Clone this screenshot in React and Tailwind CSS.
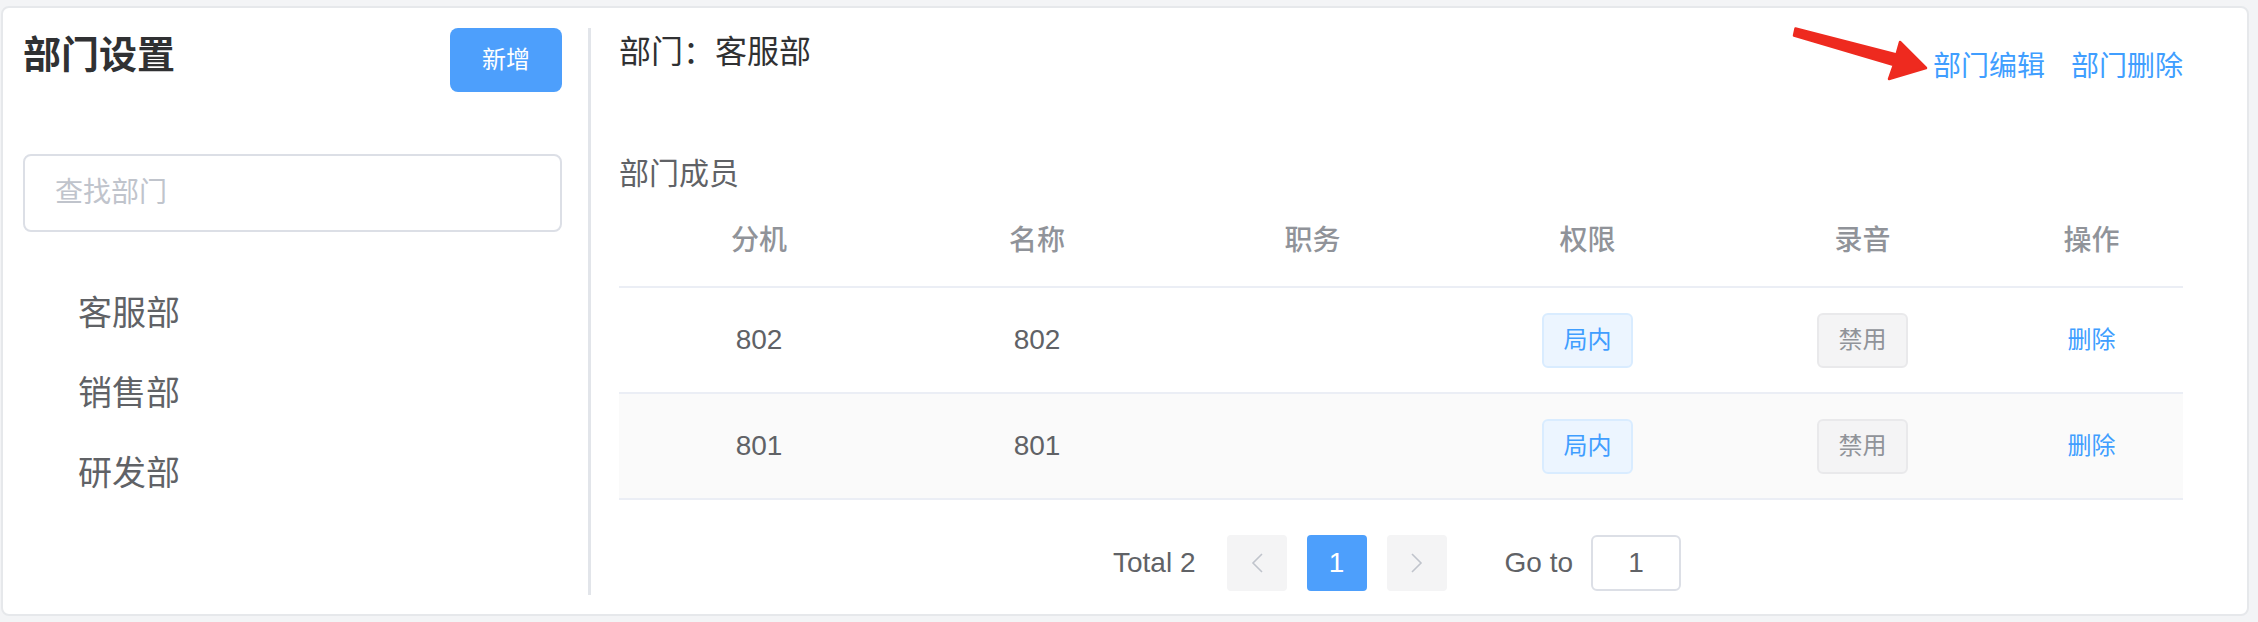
export default function App() {

  const depts = ["客服部", "销售部", "研发部"];
  const members = [
    { ext: "802", name: "802" },
    { ext: "801", name: "801" }
  ];
  const cols = ["w-[280px]", "w-[276px]", "w-[275px]", "w-[275px]", "w-[275px]", "w-[183px]"];
  const heads = ["分机", "名称", "职务", "权限", "录音", "操作"];

  return (

    <div className="h-[622px] w-[2258px] bg-[#f3f4f6] pt-[6px] pl-[1px] font-['Liberation_Sans','Noto_Sans_CJK_SC',sans-serif]">

      <div className="relative h-[610px] w-[2248px] rounded-[8px] border-2 border-[#e6e8eb] bg-white pt-[20px] pl-[20px]">

        <div className="flex">

          {/* left: department list */}
          <div className="w-[565px] pr-[26px]">

            <div className="flex items-start justify-between">
              <h2 className="text-[38px] leading-[54px] font-bold text-[#303133]">
                部门设置
              </h2>
              <button className="h-[64px] w-[112px] rounded-[8px] bg-[#4d9ffc] text-[24px] text-white">
                新增
              </button>
            </div>

            <input
            className="mt-[62px] h-[78px] w-full rounded-[8px] border-2 border-[#dcdfe6] pl-[30px] text-[28px] text-[#606266] outline-none placeholder:text-[#c0c4cc]"
            placeholder="查找部门"
            />

            <div className="mt-[41px]">
              {depts.map((d) => (
                <div key={d} className="h-[80px] pl-[55px] text-[34px] leading-[80px] text-[#606266]">
                  {d}
                </div>
              ))}
            </div>

          </div>

          {/* right: department detail */}
          <div className="h-[567px] border-l-[3px] border-[#e2e5ea] pl-[28px]">

            <div className="flex w-[1564px] items-start justify-between">
              <div className="text-[32px] leading-[48px] text-[#303133]">
                部门：客服部
              </div>
              <div className="mt-[19px] flex gap-[26px] text-[28px] leading-[40px] text-[#409eff]">
                <span>部门编辑</span>
                <span>部门删除</span>
              </div>
            </div>

            <div className="mt-[65px] text-[30px] leading-[44px] text-[#606266]">
              部门成员
            </div>

            <div className="w-[1564px]">

              <div className="flex h-[92px] items-center border-b-2 border-[#ebeef5] text-[28px] font-medium text-[#909399]">
                {heads.map((h, i) => (
                  <div key={h} className={cols[i] + " text-center"}>{h}</div>
                ))}
              </div>

              {members.map((m, idx) => (
                <div
                key={m.ext}
                className={idx % 2 === 1
                  ? "flex h-[106px] items-center border-b-2 border-[#ebeef5] bg-[#fafafa] text-[28px] text-[#606266]"
                  : "flex h-[106px] items-center border-b-2 border-[#ebeef5] text-[28px] text-[#606266]"}
                >
                  <div className="w-[280px] text-center">{m.ext}</div>
                  <div className="w-[276px] text-center">{m.name}</div>
                  <div className="w-[275px] text-center"></div>
                  <div className="flex w-[275px] justify-center">
                    <span className="flex h-[55px] w-[91px] items-center justify-center rounded-[6px] border-2 border-[#d9ecff] bg-[#ecf5ff] text-[24px] text-[#409eff]">
                      局内
                    </span>
                  </div>
                  <div className="flex w-[275px] justify-center">
                    <span className="flex h-[55px] w-[91px] items-center justify-center rounded-[6px] border-2 border-[#e9e9eb] bg-[#f4f4f5] text-[24px] text-[#909399]">
                      禁用
                    </span>
                  </div>
                  <div className="w-[183px] text-center text-[24px] text-[#409eff]">删除</div>
                </div>
              ))}

              {/* pagination */}
              <div className="mt-[35px] flex items-center justify-center pr-[8px] text-[28px] text-[#606266]">
                <span className="mr-[31px]">Total 2</span>
                <button className="flex h-[56px] w-[60px] items-center justify-center rounded-[4px] bg-[#f4f4f5]">
                  <svg width="12" height="20" viewBox="0 0 12 20" fill="none" stroke="#c0c4cc" strokeWidth="1.6">
                    <polyline points="11,1 2,10 11,19" />
                  </svg>
                </button>
                <button className="ml-[20px] h-[56px] w-[60px] rounded-[4px] bg-[#4d9ffc] text-[28px] text-white">
                  1
                </button>
                <button className="ml-[20px] flex h-[56px] w-[60px] items-center justify-center rounded-[4px] bg-[#f4f4f5]">
                  <svg width="12" height="20" viewBox="0 0 12 20" fill="none" stroke="#c0c4cc" strokeWidth="1.6">
                    <polyline points="1,1 10,10 1,19" />
                  </svg>
                </button>
                <span className="ml-[58px]">Go to</span>
                <div className="ml-[18px] flex h-[56px] w-[90px] items-center justify-center rounded-[6px] border-2 border-[#dcdfe6] bg-white">
                  1
                </div>
              </div>

            </div>

          </div>

        </div>

        {/* red annotation arrow */}
        <svg className="absolute left-[1787px] top-[17px]" width="140" height="62" viewBox="0 0 140 62">
          <polygon
          points="5.5,3.5 106.5,29.5 110,17 136,43 99,54 103.9,40 4,10.5"
          fill="#ee2a1f"
          stroke="#ee2a1f"
          strokeWidth="2.5"
          strokeLinejoin="round"
          />
        </svg>

      </div>

    </div>

  );
}
